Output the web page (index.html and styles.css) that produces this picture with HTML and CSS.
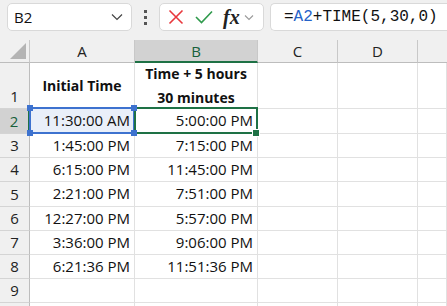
FILE: index.html
```html
<!DOCTYPE html>
<html lang="en">
<head>
  <meta charset="UTF-8" />
  <title>Sheet</title>
  <link rel="stylesheet" href="styles.css">
</head>
<body>

<!-- Formula bar -->
<div class="bar">
  <div class="namebox">
    <span>B2</span>
    <svg width="12" height="8" viewBox="0 0 12 8"><path d="M1 1.5 L6 6.5 L11 1.5" fill="none" stroke="#444" stroke-width="1.2"/></svg>
  </div>
  <div class="dots"><i></i><i></i><i></i></div>
  <div class="iconbox">
    <svg width="16" height="16" viewBox="0 0 16 16"><path d="M1.5 1.5 L14.5 14.5 M14.5 1.5 L1.5 14.5" stroke="#e8383d" stroke-width="1.6"/></svg>
    <svg width="18" height="14" viewBox="0 0 18 14"><path d="M1 7 L6.5 12.5 L17 1.5" fill="none" stroke="#2f9a4c" stroke-width="1.6"/></svg>
    <span class="fx">fx</span>
    <svg width="10" height="7" viewBox="0 0 10 7"><path d="M1 1.5 L5 5.5 L9 1.5" fill="none" stroke="#9a9a9a" stroke-width="1.1"/></svg>
  </div>
  <div class="formula">=<span class="ref-a">A2</span>+TIME(5,30,0)</div>
</div>

<!-- Grid -->
<div class="sheet">
  <div class="corner"><svg width="16" height="16" viewBox="0 0 16 16"><polygon points="16,0 16,16 0,16" fill="#b4b4b4"/></svg></div>
  <div class="colhead">A</div>
  <div class="colhead sel">B</div>
  <div class="colhead">C</div>
  <div class="colhead">D</div>
  <div class="colhead last"></div>

  <div class="rowhead">1</div>
  <div class="cell head first">Initial Time</div>
  <div class="cell head">Time + 5 hours<br>30 minutes</div>
  <div class="cell"></div><div class="cell"></div><div class="cell"></div>

  <div class="rowhead sel">2</div>
  <div class="cell num refcell">11:30:00 AM<b class="h tl"></b><b class="h tr"></b><b class="h bl"></b><b class="h br"></b></div>
  <div class="cell num active">5:00:00 PM<b class="fill"></b></div>
  <div class="cell"></div><div class="cell"></div><div class="cell"></div>

  <div class="rowhead">3</div>
  <div class="cell num">1:45:00 PM</div>
  <div class="cell num">7:15:00 PM</div>
  <div class="cell"></div><div class="cell"></div><div class="cell"></div>

  <div class="rowhead">4</div>
  <div class="cell num">6:15:00 PM</div>
  <div class="cell num">11:45:00 PM</div>
  <div class="cell"></div><div class="cell"></div><div class="cell"></div>

  <div class="rowhead">5</div>
  <div class="cell num">2:21:00 PM</div>
  <div class="cell num">7:51:00 PM</div>
  <div class="cell"></div><div class="cell"></div><div class="cell"></div>

  <div class="rowhead">6</div>
  <div class="cell num">12:27:00 PM</div>
  <div class="cell num">5:57:00 PM</div>
  <div class="cell"></div><div class="cell"></div><div class="cell"></div>

  <div class="rowhead">7</div>
  <div class="cell num">3:36:00 PM</div>
  <div class="cell num">9:06:00 PM</div>
  <div class="cell"></div><div class="cell"></div><div class="cell"></div>

  <div class="rowhead">8</div>
  <div class="cell num">6:21:36 PM</div>
  <div class="cell num">11:51:36 PM</div>
  <div class="cell"></div><div class="cell"></div><div class="cell"></div>

  <div class="rowhead">9</div>
  <div class="cell"></div><div class="cell"></div>
  <div class="cell"></div><div class="cell"></div><div class="cell"></div>

  <div class="rowhead"></div>
  <div class="cell"></div><div class="cell"></div>
  <div class="cell"></div><div class="cell"></div><div class="cell"></div>
</div>

</body>
</html>
```

FILE: styles.css
```css
* {
  box-sizing: border-box;
}

body {
  margin: 0;
  width: 447px;
  height: 306px;
  overflow: hidden;
  background: #fff;
  font-family: 'Open Sans', 'Liberation Sans', sans-serif;
  color: #111;
}

.bar {
  height: 40px;
  background: #f0f0f0;
  display: flex;
  align-items: flex-start;
  padding: 3px 0 0 7px;
}

.namebox {
  width: 125px;
  height: 28px;
  background: #fff;
  border: 1px solid #d9d9d9;
  border-radius: 5px;
  display: flex;
  align-items: center;
  justify-content: space-between;
  padding: 0 8px 0 6px;
  font-size: 15px;
}

.dots {
  width: 27px;
  height: 28px;
  display: flex;
  flex-direction: column;
  align-items: center;
  justify-content: center;
  gap: 3px;
}

.dots i {
  width: 3px;
  height: 3px;
  background: #555;
}

.iconbox {
  width: 105px;
  height: 28px;
  background: #fff;
  border: 1px solid #d9d9d9;
  border-radius: 5px;
  display: flex;
  align-items: center;
  padding: 0 0 0 8px;
}

.iconbox svg:nth-child(1) { margin-right: 11px; }
.iconbox svg:nth-child(2) { margin-right: 10px; }

.fx {
  font-family: 'Liberation Serif', serif;
  font-style: italic;
  font-weight: bold;
  font-size: 20px;
  margin-right: 4px;
  color: #222;
}

.formula {
  margin-left: 6px;
  flex: 1;
  height: 28px;
  background: #fff;
  border: 1px solid #d9d9d9;
  border-right: none;
  border-radius: 5px 0 0 5px;
  font-family: 'Liberation Mono', monospace;
  font-size: 16px;
  line-height: 26px;
  padding-left: 13px;
  white-space: nowrap;
}

.ref-a {
  color: #2563c9;
}

.sheet {
  display: grid;
  grid-template-columns: 30px 105px 123px 80px 80px 29px;
  grid-template-rows: 23px 46px 25px 24px 24px 25px 24px 24px 24px 24px 24px;
}

.corner {
  background: #f0f0f0;
  border-right: 1px solid #c8c8c8;
  border-bottom: 1px solid #bdbdbd;
  display: flex;
  align-items: flex-end;
  justify-content: flex-end;
  padding: 0 3px 3px 0;
}

.colhead {
  background: #f0f0f0;
  border-right: 1px solid #c8c8c8;
  border-bottom: 1px solid #bdbdbd;
  text-align: center;
  font-size: 15px;
  line-height: 22px;
  color: #222;
}

.colhead.sel {
  background: #d2d2d2;
  color: #17603a;
  border-bottom: 2px solid #1e7145;
}

.colhead.last {
  border-right: none;
}

.rowhead {
  background: #f0f0f0;
  border-right: 1px solid #bdbdbd;
  border-bottom: 1px solid #d4d4d4;
  display: flex;
  align-items: flex-end;
  justify-content: center;
  font-size: 15px;
  line-height: 23px;
  color: #222;
}

.rowhead.sel {
  background: #d2d2d2;
  color: #17603a;
  border-right: 2px solid #1e7145;
}

.cell {
  position: relative;
  border-right: 1px solid #e1e1e1;
  border-bottom: 1px solid #e1e1e1;
  font-size: 15px;
  line-height: 23px;
  white-space: nowrap;
}

.head {
  display: flex;
  align-items: center;
  justify-content: center;
  text-align: center;
  font-weight: bold;
  font-size: 14px;
  line-height: 24px;
}

.num {
  text-align: right;
  padding-right: 4px;
}

.refcell {
  background: #e9eff9;
}

.refcell::after {
  content: '';
  position: absolute;
  left: -1px;
  top: -2px;
  right: -1px;
  bottom: -1px;
  border: 2px solid #3d72cf;
}

.h {
  position: absolute;
  width: 6px;
  height: 6px;
  background: #3d72cf;
  z-index: 2;
}

.tl { left: -3px; top: -4px; }
.tr { right: -3px; top: -4px; }
.bl { left: -3px; bottom: -3px; }
.br { right: -3px; bottom: -3px; }

.active::after {
  content: '';
  position: absolute;
  left: -1px;
  top: -2px;
  right: -1px;
  bottom: -1px;
  border: 2px solid #1e7145;
}

.fill {
  position: absolute;
  width: 6px;
  height: 6px;
  right: -3px;
  bottom: -4px;
  background: #1e7145;
  border: 1px solid #fff;
  z-index: 2;
  box-sizing: content-box;
}
```
